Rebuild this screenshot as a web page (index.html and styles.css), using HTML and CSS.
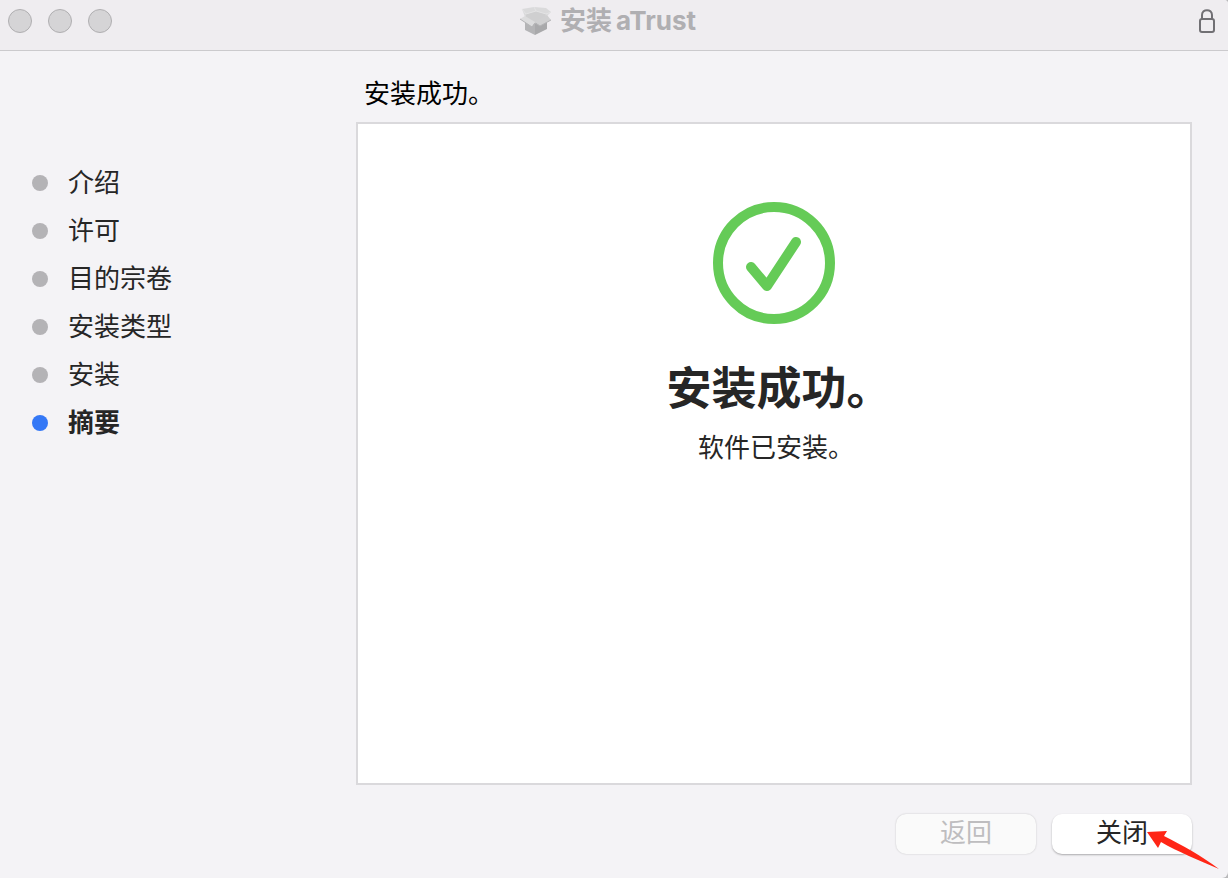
FILE: index.html
```
<!DOCTYPE html>
<html lang="zh-CN">
<head>
    <meta charset="utf-8">
    <title>安装 aTrust</title>
    <link rel="stylesheet" href="styles.css">
</head>
<body>
    <div class="window">
        <header class="titlebar">
            <div class="lights">
                <span class="light"></span>
                <span class="light"></span>
                <span class="light"></span>
            </div>
            <div class="title">
                <svg class="box-icon" viewBox="0 0 32 28" width="32" height="28">
                    <!-- body -->
                    <path fill="#b4b4b6" d="M5 12 L15 16 V28 L5 23 Z"/>
                    <path fill="#a9a9ab" d="M15 16 L27 12 V22 L15 28 Z"/>
                    <!-- inside and back flaps -->
                    <path fill="#dadadb" d="M2 2 L14 0 L26 1 L31 5 L26 10 L15 17 L5 10 Z"/>
                    <path fill="#cfcfd0" d="M6 7 L16 4 L26 7 L25 11 L15 16 L6 11 Z"/>
                    <path fill="none" stroke="#e3e3e4" d="M2 2 L6 7 L16 4 L26 7 L31 5 M16 4 L14 0"/>
                    <!-- front flaps -->
                    <path fill="#dcdcdd" d="M5 9 L15 15 L12 20 L0 12 Z"/>
                    <path fill="#d0d0d1" d="M27 8 L15 15 L20 19 L31 13 Z"/>
                    <path fill="none" stroke="#b4b4b6" d="M0 12 L12 20 L15 16 L20 19 L31 13"/>
                </svg>
                <h1><span>安装</span> <span>aTrust</span></h1>
            </div>
            <svg class="lock-icon" viewBox="0 0 18 26" width="18" height="26" fill="none" stroke="#717074" stroke-width="2">
                <rect x="2" y="11" width="14" height="13" rx="2"/>
                <path d="M4 11 V7 C4 0.500 14 0.500 14 7 V11"/>
            </svg>
        </header>

        <div class="content">
            <!-- Steps -->
            <ol class="steps">
                <li>介绍</li>
                <li>许可</li>
                <li>目的宗卷</li>
                <li>安装类型</li>
                <li>安装</li>
                <li class="current">摘要</li>
            </ol>

            <main class="main">
                <p class="heading">安装成功。</p>
                <section class="panel">
                    <svg class="check" viewBox="0 0 122 122" width="122" height="122" fill="none" stroke="#65cb57" stroke-width="10" stroke-linecap="round" stroke-linejoin="round">
                        <circle cx="61" cy="61" r="56"/>
                        <path d="M38 65 L54 84 L83 40"/>
                    </svg>
                    <h2>安装成功。</h2>
                    <p>软件已安装。</p>
                </section>
                <div class="buttons">
                    <button type="button" disabled>返回</button>
                    <button type="button" class="close-btn">关闭
                        <svg class="arrow" viewBox="0 0 73 40" width="73" height="40">
                            <path fill="#ff2616" d="M0 2 L20 1 L17 6 C35 15 55 26 72 39 C52 30 31 22 14 12 L11 18 Z"/>
                        </svg>
                    </button>
                </div>
            </main>
        </div>
    </div>
</body>
</html>
```
FILE: styles.css
```
* {
    box-sizing: border-box;
}
body {
    margin: 0;
    background-color: #b8b8ba;
    color: #262626;
    font-family: Inter, "Noto Sans CJK SC", sans-serif;
    font-size: 26px;
    line-height: 36px;
}
h1, h2, p {
    margin: 0;
}
.window {
    display: flex;
    flex-direction: column;
    min-height: 100vh;
    background-color: #f4f3f6;
    border-radius: 0 4px 6px 0;
    overflow: hidden;
}

/* Title bar */
.titlebar {
    display: grid;
    grid-template-columns: 1fr auto 1fr;
    height: 51px;
    padding: 0 12px 8px 8px;
    align-items: center;
    background-color: #efedf0;
    border-bottom: 1px solid #cbcacd;
}
.lights {
    display: flex;
    gap: 16px;
}
.light {
    width: 24px;
    height: 24px;
    border: 1px solid #b0afb1;
    border-radius: 50%;
    background-color: #d5d4d6;
}
.title {
    display: flex;
    align-items: center;
    gap: 8px;
    padding-right: 8px;
    color: #b0afb2;
}
.title h1 {
    display: flex;
    gap: 4px;
    font-size: 26px;
    font-weight: bold;
}
.lock-icon {
    justify-self: end;
}

.content {
    display: flex;
    flex: 1;
}

/* Steps */
.steps {
    width: 29%;
    margin: 0;
    padding: 108px 0 0 32px;
    list-style: none;
}
.steps li {
    display: flex;
    align-items: center;
    gap: 20px;
    height: 48px;
}
.steps li::before {
    content: "";
    width: 16px;
    height: 16px;
    border-radius: 50%;
    background-color: #b4b3b6;
}
.steps .current {
    font-weight: bold;
}
.steps .current::before {
    background-color: #3478f6;
}

/* Right side */
.main {
    display: flex;
    flex: 1;
    flex-direction: column;
    padding: 25px 36px 24px 0;
}
.heading {
    padding: 0 8px 10px;
    color: #000000;
}
.panel {
    display: flex;
    flex: 1;
    flex-direction: column;
    align-items: center;
    padding-top: 78px;
    background-color: #ffffff;
    border: 2px solid #dad9dc;
}
.panel h2 {
    margin-top: 33px;
    padding-left: 10px;
    font-size: 45px;
    line-height: 64px;
}
.panel p {
    margin-top: 9px;
    padding-left: 4px;
}
.buttons {
    display: flex;
    justify-content: flex-end;
    gap: 16px;
    margin-top: 29px;
}
button {
    position: relative;
    width: 140px;
    height: 40px;
    padding: 0 0 2px;
    border: none;
    border-radius: 10px;
    background-color: #ffffff;
    box-shadow: 0 1px 2px rgba(0, 0, 0, 0.3);
    color: #262626;
    font: inherit;
}
button:disabled {
    background-color: #fafafa;
    box-shadow: 0 0 2px rgba(0, 0, 0, 0.2);
    color: #bebdbf;
}
.arrow {
    position: absolute;
    top: 16px;
    left: 95px;
}
```
